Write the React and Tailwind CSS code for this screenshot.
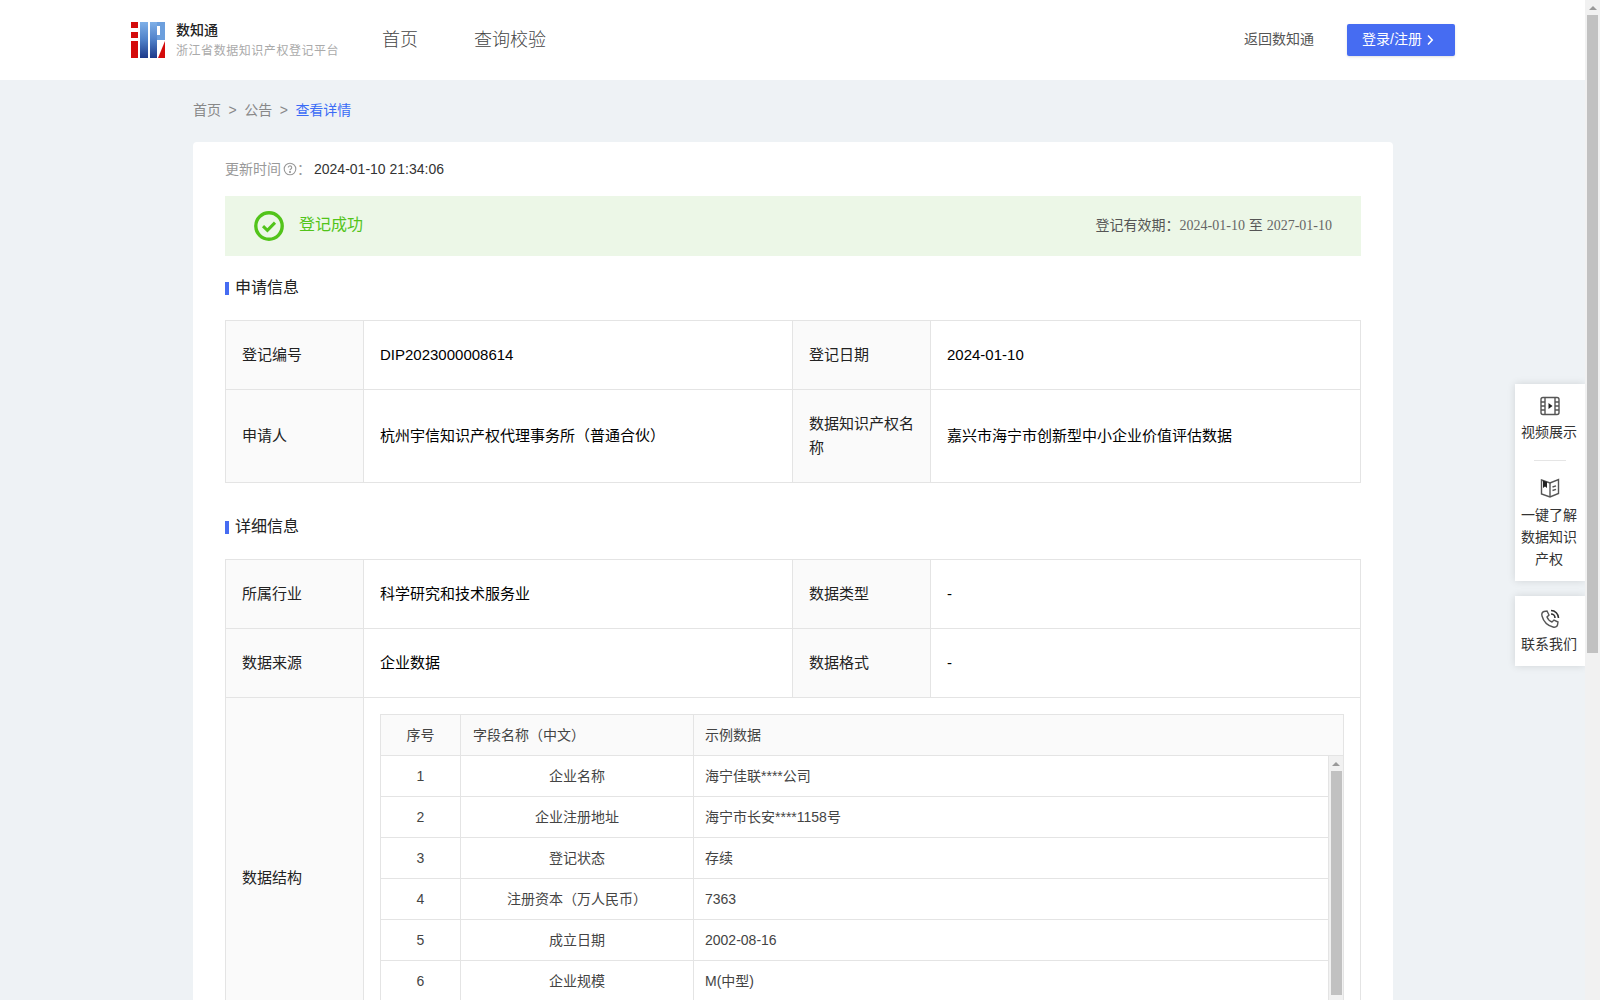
import React from "react";

function Logo() {
  return (
    <svg width="34" height="36" viewBox="0 0 34 36" className="shrink-0">
      <defs>
        <linearGradient id="lg" x1="0" y1="0" x2="0" y2="1">
          <stop offset="0" stopColor="#7fb0e8" />
          <stop offset="0.5" stopColor="#4f80c8" />
          <stop offset="1" stopColor="#1d3a8a" />
        </linearGradient>
      </defs>
      <rect x="0" y="0" width="7" height="6" fill="#d40b0b" />
      <rect x="0" y="10" width="7" height="6" fill="#d40b0b" />
      <rect x="0" y="19" width="7" height="17" fill="#d40b0b" />
      <rect x="9" y="0" width="8" height="36" fill="url(#lg)" />
      <rect x="19" y="0" width="7" height="36" fill="url(#lg)" />
      <path d="M26 0H34V18H26V13H29V4H26Z" fill="#6c9fdd" />
      <path d="M27 36L34 19V36Z" fill="#d40b0b" />
    </svg>
  );
}

function Header() {
  return (
    <header className="h-20 bg-white flex items-center pl-[131px] pr-[130px] shrink-0">
      <Logo />
      <div className="ml-[11px] w-[168px]">
        <div className="text-[14px] leading-[18px] font-medium text-[#222] -mt-[1px]">数知通</div>
        <div className="text-[12px] leading-[18px] mt-[3px] -mb-[2px] tracking-[0.55px] text-[#aaa] whitespace-nowrap">浙江省数据知识产权登记平台</div>
      </div>
      <nav className="ml-[38px] flex gap-[56px] text-[18px] font-light text-[#444]">
        <span>首页</span>
        <span>查询校验</span>
      </nav>
      <div className="ml-auto flex items-center gap-[33px]">
        <span className="text-[14px] text-[#555] pb-[1px]">返回数知通</span>
        <button className="h-8 w-[108px] rounded-[2px] bg-[#466cf2] text-white text-[14px] flex items-center pl-[15px] pb-[1px] gap-1 shadow-sm">
          登录/注册
          <svg width="8" height="12" viewBox="0 0 8 12" fill="none" stroke="#fff" strokeWidth="1.6"><path d="M2 1.5L6.2 6L2 10.5" /></svg>
        </button>
      </div>
    </header>
  );
}

function Breadcrumb() {
  return (
    <div className="h-[62px] pb-[2px] flex items-center text-[14px] text-[#888] gap-[7.5px]">
      <span>首页</span>
      <span>&gt;</span>
      <span>公告</span>
      <span>&gt;</span>
      <span className="text-[#3b6cf6]">查看详情</span>
    </div>
  );
}

function Section({ children }) {
  return (
    <div className="flex items-center h-6 text-[16px] text-[#222]">
      <span className="w-1 h-[13px] bg-[#466cf2] mr-[6px] mt-[2px]" />
      <span className="mt-[1px]">{children}</span>
    </div>
  );
}

const L = "bg-[#fafafa] border border-[#e4e4e4] px-4 py-[22px] text-[15px] leading-6 text-[#222] font-normal text-left";
const V = "border border-[#e4e4e4] px-4 py-[22px] text-[15px] leading-6 text-[#000] text-left";

function Info({ rows, extra }) {
  return (
    <table className="w-[1136px] table-fixed border-collapse">
      <colgroup>
        <col className="w-[138px]" />
        <col className="w-[429px]" />
        <col className="w-[138px]" />
        <col />
      </colgroup>
      <tbody>
        {rows.map((r, i) => (
          <tr key={i}>
            <th className={L}>{r[0]}</th>
            <td className={V}>{r[1]}</td>
            <th className={L}>{r[2]}</th>
            <td className={V}>{r[3]}</td>
          </tr>
        ))}
        {extra}
      </tbody>
    </table>
  );
}

const fields = [
  ["1", "企业名称", "海宁佳联****公司"],
  ["2", "企业注册地址", "海宁市长安****1158号"],
  ["3", "登记状态", "存续"],
  ["4", "注册资本（万人民币）", "7363"],
  ["5", "成立日期", "2002-08-16"],
  ["6", "企业规模", "M(中型)"],
];

function FieldTable() {
  return (
    <div className="w-[964px] border-t border-l border-r border-[#e4e4e4] text-[14px] text-[#444]">
      <div className="flex h-[41px] bg-[#fafafa] border-b border-[#e4e4e4] items-center">
        <div className="w-[80px] h-full flex items-center justify-center border-r border-[#e4e4e4]">序号</div>
        <div className="w-[233px] h-full flex items-center pl-3 border-r border-[#e4e4e4]">字段名称（中文）</div>
        <div className="pl-[11px]">示例数据</div>
      </div>
      <div className="flex h-[286px]">
        <div className="flex-1">
          {fields.map((f) => (
            <div key={f[0]} className="flex h-[41px] border-b border-[#e4e4e4] items-center">
              <div className="w-[80px] h-full flex items-center justify-center border-r border-[#e4e4e4]">{f[0]}</div>
              <div className="w-[233px] h-full flex items-center justify-center border-r border-[#e4e4e4]">{f[1]}</div>
              <div className="pl-[11px]">{f[2]}</div>
            </div>
          ))}
        </div>
        <div className="w-[15px] bg-[#f1f1f1] border-l border-[#e4e4e4] flex flex-col items-center">
          <div className="h-[15px] flex items-center justify-center">
            <div className="w-0 h-0 border-l-[4px] border-r-[4px] border-b-[4px] border-l-transparent border-r-transparent border-b-[#999]" />
          </div>
          <div className="w-[11px] h-[224px] bg-[#c1c1c1]" />
        </div>
      </div>
    </div>
  );
}

function Card() {
  return (
    <div className="w-[1200px] bg-white rounded-[4px] px-8 pt-[15px]">
      <div className="flex items-center h-6 text-[14px] text-[#999]">
        更新时间
        <svg width="14" height="14" viewBox="0 0 14 14" className="ml-[2px]" fill="none" stroke="#999" strokeWidth="1.1">
          <circle cx="7" cy="7" r="5.8" />
          <path d="M5.3 5.6a1.7 1.7 0 1 1 2.6 1.4c-.6.4-.9.7-.9 1.3" />
          <circle cx="7" cy="10" r="0.5" fill="#999" />
        </svg>
        <span className="w-[17px]">：</span>
        <span className="text-[#333]">2024-01-10 21:34:06</span>
      </div>
      <div className="mt-[15px] h-[60px] bg-[#ecf7e7] flex items-center pl-[29px] pr-[29px]">
        <svg width="30" height="30" viewBox="0 0 30 30" fill="none" stroke="#52c41a">
          <circle cx="15" cy="15" r="13.2" strokeWidth="3.4" />
          <path d="M9 15.2L13.4 19.4L21 11.6" strokeWidth="3" />
        </svg>
        <span className="ml-[15px] pb-[2px] text-[16px] text-[#52c41a]">登记成功</span>
        <span className="ml-auto pb-[2px] text-[14px] text-[#555]">
          登记有效期：<span className="font-['Liberation_Serif',serif] text-[#666]">2024-01-10</span> 至 <span className="font-['Liberation_Serif',serif] text-[#666]">2027-01-10</span>
        </span>
      </div>
      <div className="mt-[19px]">
        <Section>申请信息</Section>
      </div>
      <div className="mt-[21px]">
        <Info
          rows={[
            ["登记编号", "DIP2023000008614", "登记日期", "2024-01-10"],
            ["申请人", "杭州宇信知识产权代理事务所（普通合伙）", "数据知识产权名称", "嘉兴市海宁市创新型中小企业价值评估数据"],
          ]}
        />
      </div>
      <div className="mt-[31px]">
        <Section>详细信息</Section>
      </div>
      <div className="mt-[21px]">
        <Info
          rows={[
            ["所属行业", "科学研究和技术服务业", "数据类型", "-"],
            ["数据来源", "企业数据", "数据格式", "-"],
          ]}
          extra={
            <tr>
              <th className={L}>数据结构</th>
              <td colSpan={3} className="border border-[#e4e4e4] p-4">
                <FieldTable />
              </td>
            </tr>
          }
        />
      </div>
    </div>
  );
}

function SideIcon({ children }) {
  return (
    <svg width="22" height="22" viewBox="0 0 22 22" fill="none" stroke="#555" strokeWidth="1.4" className="mx-auto">
      {children}
    </svg>
  );
}

function SidePanel() {
  return (
    <div className="absolute right-0 top-[384px] w-[70px] flex flex-col gap-[15px] text-[14px] leading-[22px] text-[#333] text-center">
      <div className="bg-white shadow-[0_0_8px_rgba(0,0,0,0.12)] pt-[11px] h-[197px]">
        <SideIcon>
          <rect x="2" y="2.5" width="18" height="17" rx="2" />
          <path d="M6 2.5V19.5M16 2.5V19.5M2 7h4M2 11h4M2 15h4M16 7h4M16 11h4M16 15h4" />
          <path d="M9.5 8L13.5 11L9.5 14Z" fill="#222" stroke="none" />
        </SideIcon>
        <div className="mt-[4px] pr-[2px]">视频展示</div>
        <div className="mx-auto mt-[17px] mb-[16px] w-8 h-px bg-[#e5e5e5]" />
        <SideIcon>
          <path d="M2.5 3L11 6L19.5 2.5V16.5L11 20L2.5 17Z" />
          <path d="M11 6V20M13.5 10l3.5-1.2M13.5 13.5l3.5-1.2" />
          <path d="M4 3.5L8 5V11L6 9.5L4 11Z" fill="#222" stroke="none" />
        </SideIcon>
        <div className="mt-[5px] pl-[6px] pr-[8px]">一键了解数据知识产权</div>
      </div>
      <div className="bg-white shadow-[0_0_8px_rgba(0,0,0,0.12)] pt-[12px] h-[70px]">
        <SideIcon>
          <path d="M5 3.5L8 3L10 7L8 9C8.8 11.2 10.8 13.2 13 14L15 12L19 14L18.5 17C18 19 16 19.5 14 19C8.5 17.5 4.5 13.5 3 8C2.5 6 3.5 4 5 3.5Z" />
          <path d="M12 2.5A7.5 7.5 0 0 1 19.5 10M12 6A4 4 0 0 1 16 10" stroke="#333" strokeWidth="1.6" />
        </SideIcon>
        <div className="mt-[3px] pr-[2px]">联系我们</div>
      </div>
    </div>
  );
}

function PageScrollbar() {
  return (
    <div className="w-[15px] h-full bg-[#f1f1f1] shrink-0 flex flex-col items-center">
      <div className="h-[15px] flex items-center justify-center">
        <div className="w-0 h-0 border-l-[4px] border-r-[4px] border-b-[4px] border-l-transparent border-r-transparent border-b-[#999]" />
      </div>
      <div className="w-[11px] h-[638px] bg-[#c1c1c1]" />
    </div>
  );
}

export default function App() {
  return (
    <div className="h-screen w-full overflow-hidden flex font-['Liberation_Sans','Noto_Sans_CJK_SC',sans-serif]">
      <div className="relative flex-1 min-w-0 bg-[#eef2f5] flex flex-col overflow-hidden">
        <Header />
        <main className="w-[1200px] ml-[193px]">
          <Breadcrumb />
          <Card />
        </main>
        <SidePanel />
      </div>
      <PageScrollbar />
    </div>
  );
}
